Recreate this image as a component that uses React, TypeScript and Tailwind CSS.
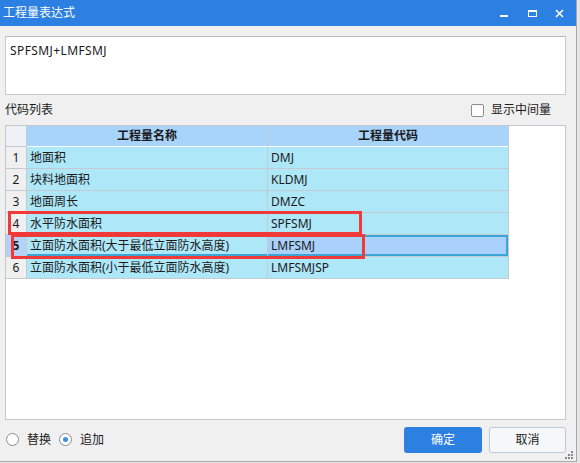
import React from "react";

const rows = [
  { no: 1, name: "地面积", code: "DMJ" },
  { no: 2, name: "块料地面积", code: "KLDMJ" },
  { no: 3, name: "地面周长", code: "DMZC" },
  { no: 4, name: "水平防水面积", code: "SPFSMJ" },
  { no: 5, name: "立面防水面积(大于最低立面防水高度)", code: "LMFSMJ" },
  { no: 6, name: "立面防水面积(小于最低立面防水高度)", code: "LMFSMJSP" },
];

const selected = 5;

function TitleBar() {
  return (
    <div className="flex h-[26px] shrink-0 items-center bg-[#2c80e1] pl-[3px] text-white">
      <span className="text-[12px] leading-none">工程量表达式</span>
      <div className="ml-auto flex h-full items-center">
        {/* minimize */}
        <svg width="28" height="26" viewBox="0 0 28 26" className="block">
          <rect x="10" y="15" width="8" height="2" fill="#fff" />
        </svg>
        {/* maximize */}
        <svg width="28" height="26" viewBox="0 0 28 26" className="block">
          <rect x="10.5" y="10.5" width="8" height="6" fill="none" stroke="#fff" strokeWidth="1" />
          <rect x="10" y="10" width="9" height="2" fill="#fff" />
        </svg>
        {/* close */}
        <svg width="28" height="26" viewBox="0 0 28 26" className="mr-[2px] block">
          <path d="M10 10 L17 17 M17 10 L10 17" stroke="#fff" strokeWidth="1.6" />
        </svg>
      </div>
    </div>
  );
}

function CodeTable() {
  return (
    <div className="relative mt-[2px] h-[295px] border border-[#c4c7cc] bg-white">
      <div className="grid grid-cols-[21px_241px_241px]">
        <div className="h-[21px] border-r border-b border-[#c5cad2] bg-[#eef1f6]" />
        <div className="flex h-[21px] items-center justify-center border-r border-b border-b-white border-r-[#c5cad2] bg-[#a8d3fb] font-bold">
          工程量名称
        </div>
        <div className="flex h-[21px] items-center justify-center border-r border-b border-b-white border-r-[#c5cad2] bg-[#a8d3fb] font-bold">
          工程量代码
        </div>
        {rows.map((r) => {
          const sel = r.no === selected;
          return (
            <React.Fragment key={r.no}>
              <div
                className={
                  sel
                    ? "flex h-[22px] items-center justify-center border-r border-b border-[#c5cad2] bg-[#b4d3f4] font-bold"
                    : "flex h-[22px] items-center justify-center border-r border-b border-[#c5cad2] bg-[#f0f0f0]"
                }
              >
                {r.no}
              </div>
              <div
                className={
                  sel
                    ? "flex h-[22px] items-center border-r border-b border-[#c5cad2] bg-[#aee7f8] pl-[3px] shadow-[inset_0_2px_0_#3aa6d8,inset_0_-2px_0_#3aa6d8] whitespace-nowrap"
                    : "flex h-[22px] items-center border-r border-b border-[#c5cad2] bg-[#aee7f8] pl-[3px] whitespace-nowrap"
                }
              >
                {r.name}
              </div>
              <div
                className={
                  sel
                    ? "flex h-[22px] items-center border-r border-b border-[#c5cad2] bg-[#a9d1fb] pl-[3px] shadow-[inset_0_2px_0_#3aa6d8,inset_0_-2px_0_#3aa6d8,inset_-2px_0_0_#3aa6d8]"
                    : "flex h-[22px] items-center border-r border-b border-[#c5cad2] bg-[#aee7f8] pl-[3px]"
                }
              >
                {r.code}
              </div>
            </React.Fragment>
          );
        })}
      </div>
      {/* red annotation frames */}
      <div className="pointer-events-none absolute top-[85px] left-[2px] h-[24px] w-[354px] border-[3px] border-[#f03a3a]" />
      <div className="pointer-events-none absolute top-[108px] left-[5px] h-[25px] w-[354px] border-[3px] border-[#f03a3a]" />
    </div>
  );
}

function Radio({ label, checked }: { label: string; checked?: boolean }) {
  return (
    <label className="flex items-center gap-[8px]">
      <span className="flex h-[13px] w-[13px] items-center justify-center rounded-full border border-[#8c8c8c] bg-white">
        {checked && <span className="h-[5px] w-[5px] rounded-full bg-[#3d8ee8]" />}
      </span>
      <span>{label}</span>
    </label>
  );
}

export default function App() {
  return (
    <div className="flex h-[463px] w-[580px] bg-[#e6e6e6] font-['Noto_Sans','Noto_Sans_CJK_SC',sans-serif] text-[12px] text-[#1a1a1a]">
      <div className="relative flex h-[462px] w-[577px] flex-col border-r border-b border-[#a8a8a8] bg-[#f0f0f0]">
        <TitleBar />
        <div className="flex flex-1 flex-col pr-[10px] pl-[5px]">
          <div className="mt-[10px] h-[59px] border border-[#c9cbd0] border-t-[#b5b8bd] bg-white px-[4px] pt-[5px] tracking-[0.4px]">
            SPFSMJ+LMFSMJ
          </div>
          <div className="mt-[2px] flex h-[26px] items-center">
            <span>代码列表</span>
            <label className="ml-auto mr-[15px] flex items-center gap-[7px]">
              <span className="h-[13px] w-[13px] rounded-[2px] border border-[#8c8c8c] bg-white" />
              <span>显示中间量</span>
            </label>
          </div>
          <CodeTable />
          <div className="flex flex-1 items-center pb-[2px]">
            <div className="flex items-center gap-[8px] pl-[1px]">
              <Radio label="替换" />
              <Radio label="追加" checked />
            </div>
            <div className="ml-auto flex gap-[7px]">
              <button className="h-[26px] w-[78px] rounded-[3px] bg-[#2c80e1] text-white">确定</button>
              <button className="h-[26px] w-[77px] rounded-[3px] border border-[#c3c9d3] bg-[#f6f7f9]">取消</button>
            </div>
          </div>
        </div>
        {/* resize grip */}
        <svg width="9" height="9" viewBox="0 0 9 9" className="absolute right-[2px] bottom-[1px]">
          <rect x="6" y="0" width="2" height="2" fill="#888" />
          <rect x="3" y="3" width="2" height="2" fill="#888" />
          <rect x="6" y="3" width="2" height="2" fill="#888" />
          <rect x="0" y="6" width="2" height="2" fill="#888" />
          <rect x="3" y="6" width="2" height="2" fill="#888" />
          <rect x="6" y="6" width="2" height="2" fill="#888" />
        </svg>
      </div>
    </div>
  );
}
